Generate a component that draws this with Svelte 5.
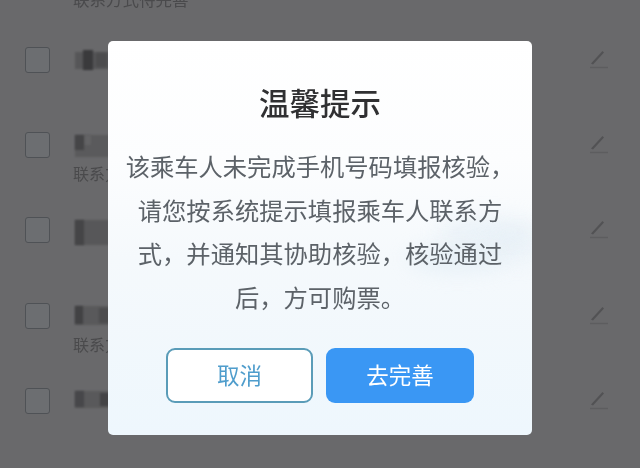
<script>
  const rows = [
    { blobs: [[0, 2, 34, 17, '#565658'], [8, 0, 10, 20, '#3a3a3c'], [21, 3, 11, 14, '#4c4c4e']], sub: false },
    { blobs: [[0, 0, 34, 22, '#5a5a5c'], [0, 0, 9, 15, '#454547'], [10, 0, 6, 10, '#636365']], sub: true },
    { blobs: [[0, 0, 34, 25, '#575759'], [0, 0, 9, 25, '#454547']], sub: false },
    { blobs: [[0, 0, 34, 19, '#59595b'], [0, 0, 8, 18, '#424244'], [24, 2, 10, 15, '#4c4c4e']], sub: true },
    { blobs: [[0, 0, 34, 17, '#59595b'], [0, 0, 9, 16, '#47474a'], [25, 2, 9, 13, '#444446']], sub: false }
  ];
</script>

<div class="page">
  <div class="partial">联系方式待完善</div>
  <ul class="list">
    {#each rows as row}
      <li class="row">
        <span class="check"></span>
        <div class="info">
          <div class="name">
            {#each row.blobs as b}
              <i style="left:{b[0]}px;top:{b[1]}px;width:{b[2]}px;height:{b[3]}px;background:{b[4]}"></i>
            {/each}
          </div>
          {#if row.sub}<div class="sub">联系方式待完善</div>{/if}
        </div>
        <svg class="pen" viewBox="0 0 24 24" width="24" height="24" aria-hidden="true">
          <path d="M4 15.5 L15.5 3 L17 4.5 L6 16.5 Z" fill="#525254" />
          <path d="M3 19.5 H21" stroke="#5d5d5f" stroke-width="1.4" fill="none" />
        </svg>
      </li>
    {/each}
  </ul>

  <div class="overlay">
    <div class="modal">
      <span class="cloud c1"></span>
      <span class="cloud c2"></span>
      <span class="cloud c3"></span>
      <h2>温馨提示</h2>
      <p>该乘车人未完成手机号码填报核验，<br />请您按系统提示填报乘车人联系方<br />式，并通知其协助核验，核验通过<br />后，方可购票。</p>
      <div class="actions">
        <button class="cancel">取消</button>
        <button class="ok">去完善</button>
      </div>
    </div>
  </div>
</div>

<style>
  :global(body) {
    margin: 0;
    background: #69696b;
  }
  .page {
    position: relative;
    width: 640px;
    height: 468px;
    overflow: hidden;
    background: #69696b;
    font-family: "Noto Sans CJK SC", "Liberation Sans", sans-serif;
    filter: blur(0.35px);
  }
  .partial {
    height: 58px;
    margin-top: -11px;
    padding-left: 73px;
    font-size: 16.5px;
    line-height: 20px;
    color: #4a4a4c;
    filter: blur(0.5px);
  }
  .list {
    list-style: none;
    margin: 0;
    padding: 0 0 0 25px;
  }
  .row {
    display: flex;
    align-items: flex-start;
    height: 85.2px;
  }
  .check {
    flex: none;
    box-sizing: border-box;
    width: 25px;
    height: 26px;
    border: 1.8px solid #4f5256;
    border-radius: 3px;
    background: #6c6e71;
  }
  .info {
    width: 514px;
    margin-left: 23px;
  }
  .name {
    position: relative;
    width: 34px;
    height: 24px;
    margin-top: 3px;
    margin-left: 2px;
  }
  .name i {
    position: absolute;
    filter: blur(1.2px);
  }
  .sub {
    margin-top: 4px;
    font-size: 16px;
    line-height: 20px;
    color: #4a4a4c;
    filter: blur(0.4px);
  }
  .pen {
    flex: none;
    margin-top: 1px;
    filter: blur(0.6px);
  }
  .overlay {
    position: absolute;
    inset: 0;
    display: flex;
    justify-content: center;
    align-items: flex-start;
    padding-top: 41px;
  }
  .modal {
    position: relative;
    box-sizing: border-box;
    width: 424px;
    height: 394px;
    overflow: hidden;
    border-radius: 5px;
    background: linear-gradient(180deg, #ffffff 0%, #fcfdfe 30%, #f5f9fc 55%, #eef7fd 100%);
    text-align: center;
  }
  .cloud {
    position: absolute;
    border-radius: 50%;
    background: #dce9f3;
    filter: blur(10px);
  }
  .c1 { left: 330px; top: 176px; width: 100px; height: 30px; opacity: 0.45; }
  .c2 { left: 300px; top: 205px; width: 100px; height: 26px; opacity: 0.55; }
  .c3 { left: 385px; top: 190px; width: 50px; height: 34px; opacity: 0.3; }
  h2 {
    position: relative;
    margin: 39px 0 0;
    font-size: 30.5px;
    line-height: 44px;
    font-weight: 500;
    color: #303032;
  }
  p {
    position: relative;
    margin: 20px 0 0;
    font-size: 24.3px;
    line-height: 43.5px;
    color: #5c6268;
  }
  .actions {
    position: relative;
    display: flex;
    justify-content: center;
    gap: 13px;
    margin-top: 30px;
  }
  button {
    box-sizing: border-box;
    height: 55px;
    padding: 0 0 4px;
    border-radius: 9px;
    font: inherit;
    font-size: 22.5px;
  }
  .cancel {
    width: 147px;
    background: #ffffff;
    border: 2px solid #5a9cb8;
    color: #4f9dcc;
  }
  .ok {
    width: 148px;
    background: #3a97f4;
    border: 0;
    color: #ffffff;
  }
</style>
